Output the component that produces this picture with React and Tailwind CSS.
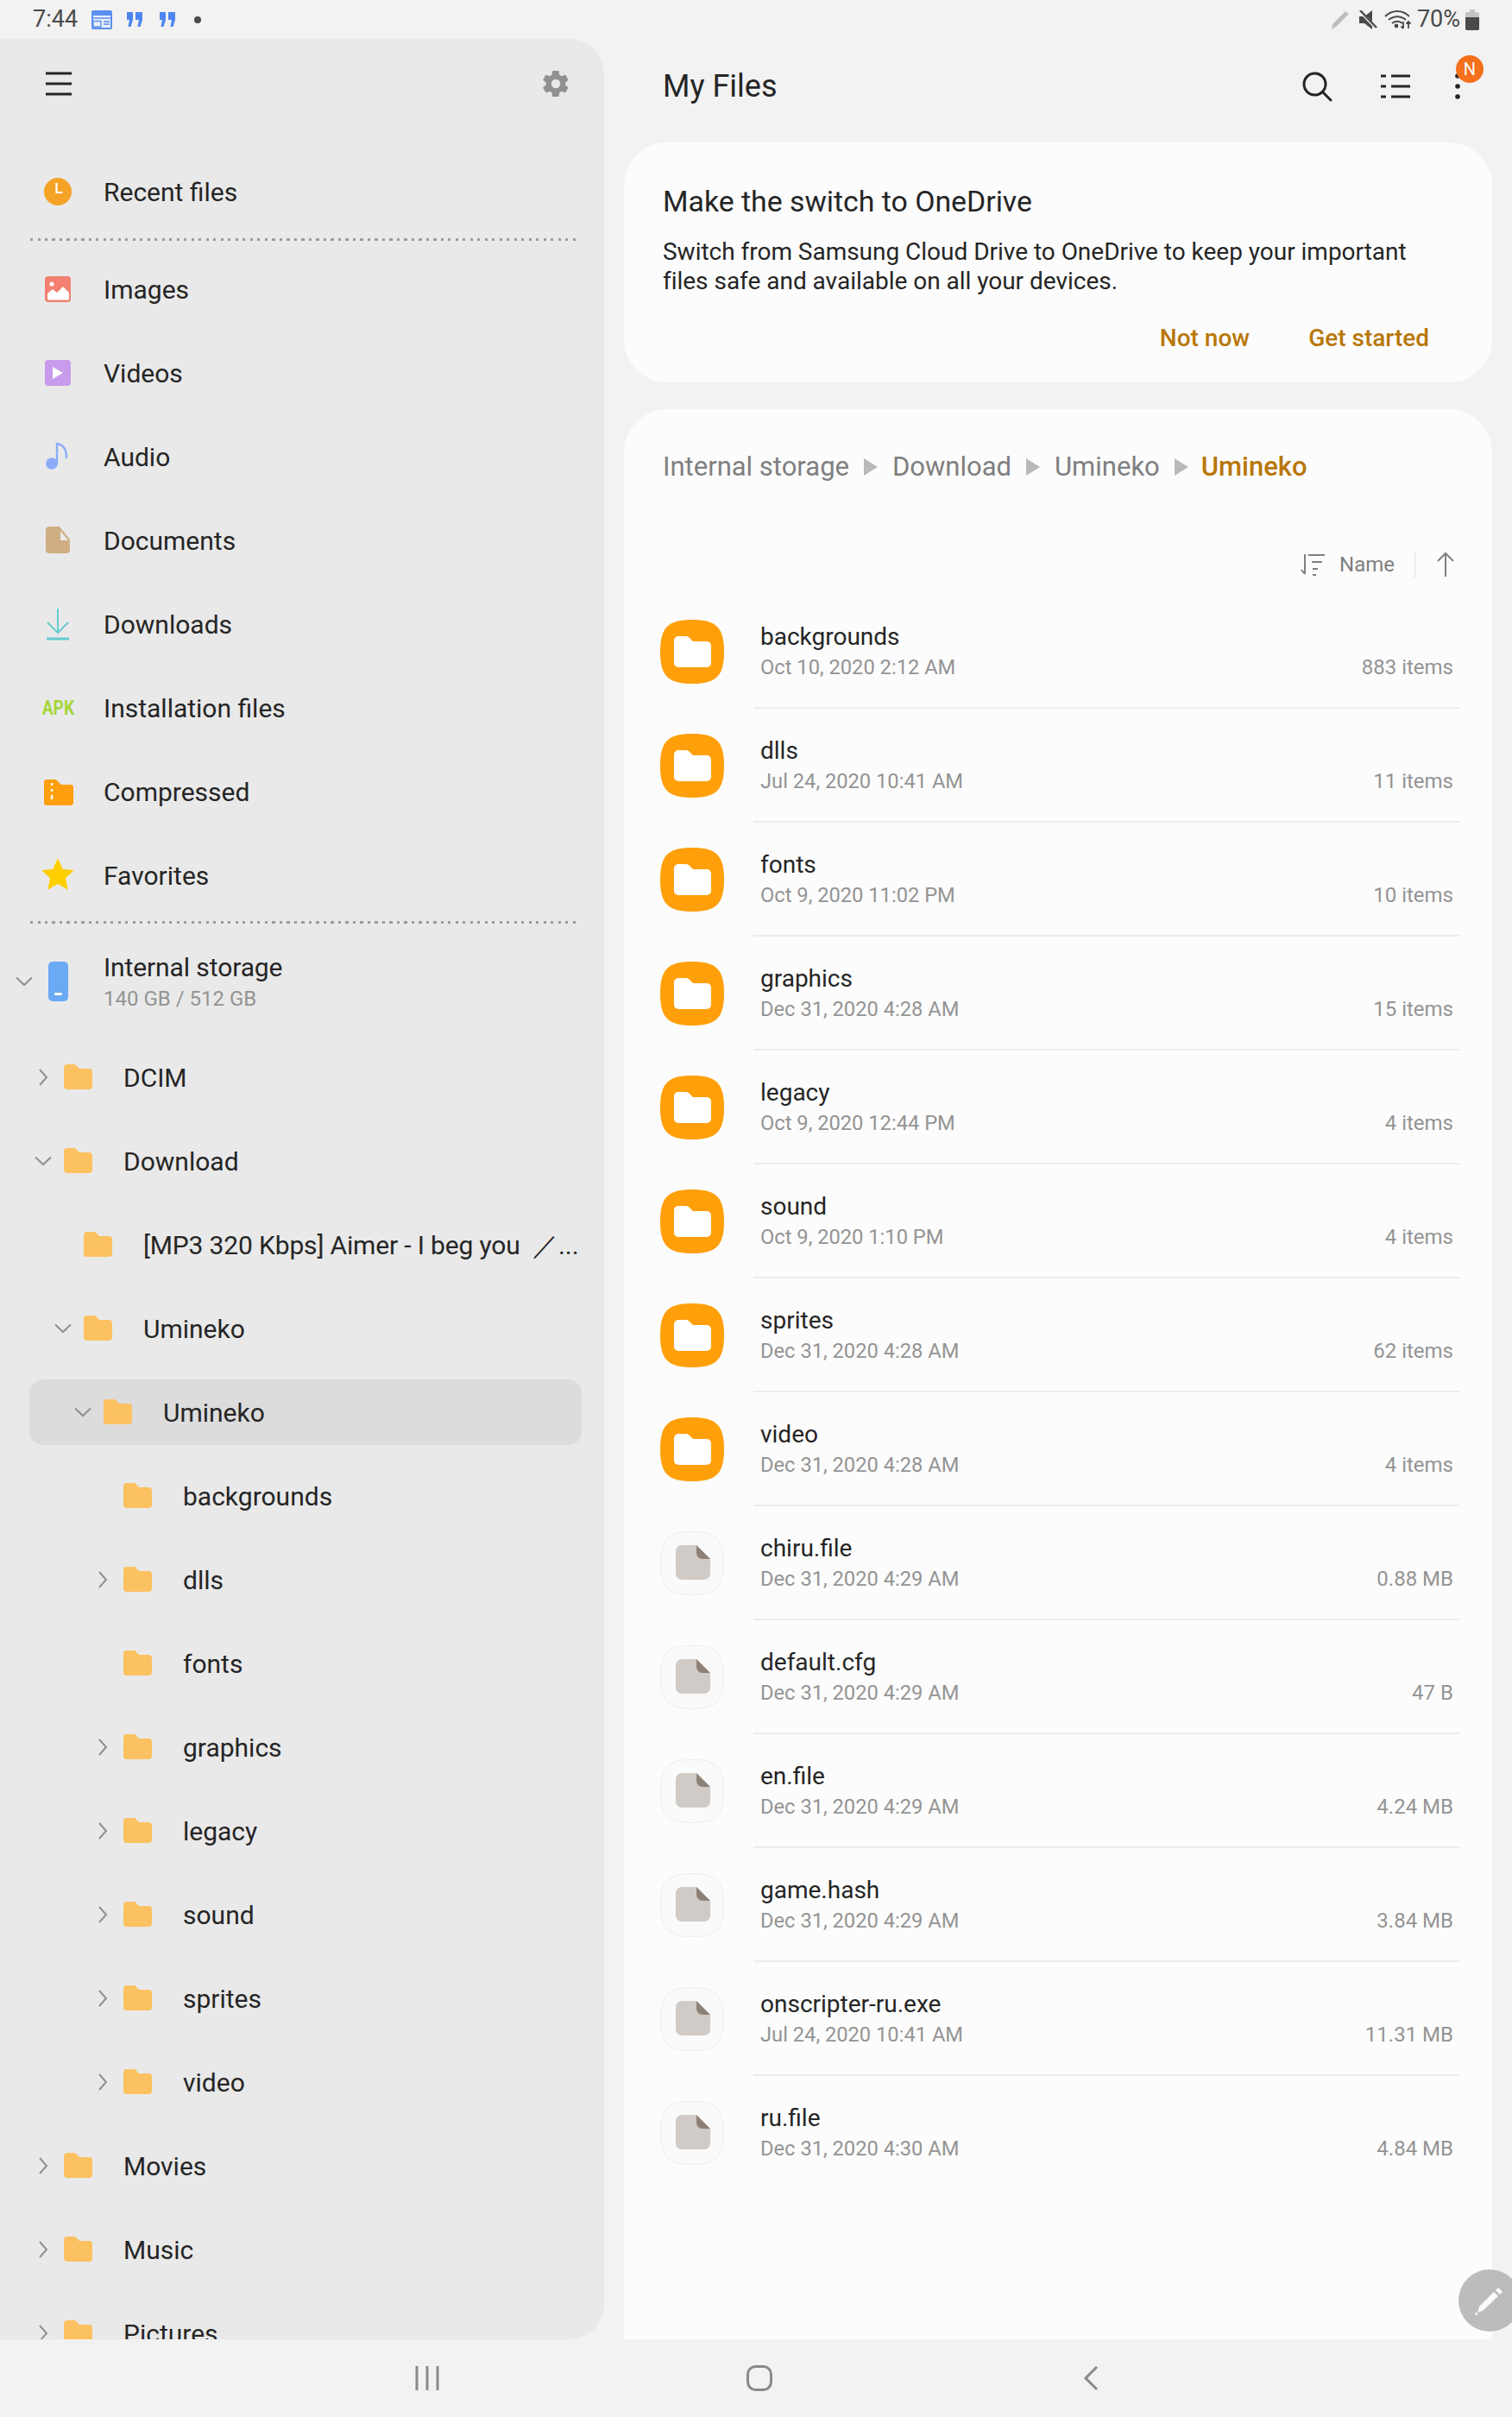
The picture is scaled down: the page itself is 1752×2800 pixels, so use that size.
import React from 'react';

const navItems = [
  ['Images', 'images'],
  ['Videos', 'videos'],
  ['Audio', 'audio'],
  ['Documents', 'documents'],
  ['Downloads', 'downloads'],
  ['Installation files', 'apk'],
  ['Compressed', 'compressed'],
  ['Favorites', 'star'],
];

const tree = [
  { name: 'DCIM', depth: 1, arrow: 'right' },
  { name: 'Download', depth: 1, arrow: 'down' },
  { name: '[MP3 320 Kbps] Aimer - I beg you \u00a0／...', depth: 2, tight: true },
  { name: 'Umineko', depth: 2, arrow: 'down' },
  { name: 'Umineko', depth: 3, arrow: 'down', active: true },
  { name: 'backgrounds', depth: 4 },
  { name: 'dlls', depth: 4, arrow: 'right' },
  { name: 'fonts', depth: 4 },
  { name: 'graphics', depth: 4, arrow: 'right' },
  { name: 'legacy', depth: 4, arrow: 'right' },
  { name: 'sound', depth: 4, arrow: 'right' },
  { name: 'sprites', depth: 4, arrow: 'right' },
  { name: 'video', depth: 4, arrow: 'right' },
  { name: 'Movies', depth: 1, arrow: 'right' },
  { name: 'Music', depth: 1, arrow: 'right' },
  { name: 'Pictures', depth: 1, arrow: 'right' },
];

const depthPad = { 1: 'pl-[6px]', 2: 'pl-[29px]', 3: 'pl-[52px]', 4: 'pl-[75px]' };

const files = [
  ['backgrounds', 'Oct 10, 2020 2:12 AM', '883 items', true],
  ['dlls', 'Jul 24, 2020 10:41 AM', '11 items', true],
  ['fonts', 'Oct 9, 2020 11:02 PM', '10 items', true],
  ['graphics', 'Dec 31, 2020 4:28 AM', '15 items', true],
  ['legacy', 'Oct 9, 2020 12:44 PM', '4 items', true],
  ['sound', 'Oct 9, 2020 1:10 PM', '4 items', true],
  ['sprites', 'Dec 31, 2020 4:28 AM', '62 items', true],
  ['video', 'Dec 31, 2020 4:28 AM', '4 items', true],
  ['chiru.file', 'Dec 31, 2020 4:29 AM', '0.88 MB'],
  ['default.cfg', 'Dec 31, 2020 4:29 AM', '47 B'],
  ['en.file', 'Dec 31, 2020 4:29 AM', '4.24 MB'],
  ['game.hash', 'Dec 31, 2020 4:29 AM', '3.84 MB'],
  ['onscripter-ru.exe', 'Jul 24, 2020 10:41 AM', '11.31 MB'],
  ['ru.file', 'Dec 31, 2020 4:30 AM', '4.84 MB'],
];

const NavIcon = ({ type }) => {
  if (type === 'apk') {
    return <span className="text-[24px] font-bold text-[#a6d53b] leading-none scale-x-[0.8]">APK</span>;
  }
  return (
    <svg width="40" height="48" viewBox="0 0 40 48">
      {type === 'clock' && (
        <>
          <ellipse cx="20" cy="24" rx="16" ry="16" fill="#f4a327" />
          <path d="M18.5 14v11h7" fill="none" stroke="#fff" strokeWidth="2.2" />
        </>
      )}
      {type === 'images' && (
        <>
          <rect x="5" y="9" width="30" height="30" rx="4" fill="#f38071" />
          <circle cx="13" cy="18" r="2.6" fill="#fff" />
          <path d="M8 35v-6l6-5 5 4 7-7 7 7v7a1.5 1.5 0 0 1-1.5 1.5h-22A1.5 1.5 0 0 1 8 35Z" fill="#fff" />
        </>
      )}
      {type === 'videos' && (
        <>
          <rect x="5" y="9" width="30" height="30" rx="4" fill="#c89bec" />
          <path d="M14 17l12 7-12 7Z" fill="#fff" />
        </>
      )}
      {type === 'audio' && (
        <>
          <circle cx="13" cy="32" r="6.8" fill="#8badf8" />
          <path d="M19 32V9c7 1 11 6 11 16" fill="none" stroke="#8badf8" strokeWidth="2.4" strokeLinecap="round" />
        </>
      )}
      {type === 'documents' && (
        <path d="M10 9h12l12 15v12a4 4 0 0 1-4 4H10a4 4 0 0 1-4-4V13a4 4 0 0 1 4-4Zm13 5v11h9Z" fill="#cfae82" fillRule="evenodd" transform="translate(0 -1)" />
      )}
      {type === 'downloads' && (
        <g fill="none" stroke="#66cbcf">
          <path d="M20 6v27M8 22l12 12 12-12" strokeWidth="2" />
          <path d="M7 41h26" strokeWidth="3" />
        </g>
      )}
      {type === 'compressed' && (
        <>
          <path d="M7 10h11l6 6h11a3 3 0 0 1 3 3v18a3 3 0 0 1-3 3H7a3 3 0 0 1-3-3V13a3 3 0 0 1 3-3Z" fill="#ff9f0d" />
          <path d="M13 14v3M13 21v3M13 28v5" stroke="#fff" strokeWidth="2.4" />
        </>
      )}
      {type === 'star' && (
        <path d="M20 6l5.2 11.6 12 1.2-9 8.2 2.6 12.4L20 33l-10.8 6.4L11.8 27l-9-8.2 12-1.2Z" fill="#ffcf00" stroke="#ffcf00" strokeWidth="1.5" strokeLinejoin="round" />
      )}
    </svg>
  );
};

const Arrow = ({ dir }) => (
  <span className="w-[20px] h-[28px] flex items-center justify-center shrink-0">
    {dir === 'right' && (
      <svg width="12" height="22" viewBox="0 0 12 22"><path d="M2 2l8 9-8 9" fill="none" stroke="#8f8f8f" strokeWidth="2" /></svg>
    )}
    {dir === 'down' && (
      <svg width="20" height="12" viewBox="0 0 20 12"><path d="M1 1.5l9 8.5 9-8.5" fill="none" stroke="#8f8f8f" strokeWidth="2" /></svg>
    )}
  </span>
);

const SmallFolder = () => (
  <svg width="33" height="29" viewBox="0 0 33 29" className="shrink-0">
    <path d="M4 0h8a3 3 0 0 1 2.4 1.2L18 5h11a4 4 0 0 1 4 4v16a4 4 0 0 1-4 4H4a4 4 0 0 1-4-4V4a4 4 0 0 1 4-4Z" fill="#fcc160" />
  </svg>
);

const Divider = ({ className }) => (
  <div className={`ml-[35px] mr-[28px] h-[3px] bg-[repeating-linear-gradient(90deg,#9b9b9b_0,#9b9b9b_3px,transparent_3px,transparent_8.5px)] ${className}`}></div>
);

const TreeRow = ({ item }) => (
  <div className={`ml-[34px] mr-[26px] my-[10.5px] h-[76px] shrink-0 flex items-center rounded-[16px] ${depthPad[item.depth]} ${item.active ? 'bg-[#dcdcdc]' : ''}`}>
    <Arrow dir={item.arrow} />
    <span className="ml-[14px]"><SmallFolder /></span>
    <span className={`ml-[36px] pt-[2px] text-[30px] text-[#252525] whitespace-nowrap ${item.tight ? 'tracking-[-0.15px]' : ''}`}>{item.name}</span>
  </div>
);

const Sidebar = () => (
  <aside className="w-[700px] h-full shrink-0 bg-[#e9e9e9] rounded-tr-[40px] rounded-br-[40px] overflow-hidden flex flex-col">
    <div className="h-[104px] shrink-0 pl-[53px] pr-[38px] flex items-center justify-between">
      <svg width="30" height="28" viewBox="0 0 30 28">
        <path d="M0 2h30M0 14h30M0 26h30" stroke="#252525" strokeWidth="3" />
      </svg>
      <svg width="36" height="36" viewBox="0 0 24 24" fill="#909090">
        <path d="M19.4 13a7.6 7.6 0 0 0 0-2l2.1-1.6a.5.5 0 0 0 .1-.6l-2-3.5a.5.5 0 0 0-.6-.2l-2.5 1a7.3 7.3 0 0 0-1.7-1L14.400 2.400a.5.5 0 0 0-.5-.4h-4a.5.5 0 0 0-.5.4L9 5.100a7.600 7.600 0 0 0-1.700 1l-2.500-1a.5.5 0 0 0-.6.2l-2 3.500a.5.5 0 0 0 .1.6L4.500 11a7.600 7.600 0 0 0 0 2l-2.200 1.600a.5.5 0 0 0-.1.6l2 3.500a.5.5 0 0 0 .6.2l2.500-1c.5.4 1.100.7 1.700 1l.4 2.700c0 .2.3.4.5.4h4c.2 0 .5-.2.5-.4l.4-2.700c.6-.3 1.200-.6 1.700-1l2.500 1a.5.5 0 0 0 .6-.2l2-3.500a.5.5 0 0 0-.1-.6ZM12 15.500a3.500 3.500 0 1 1 0-7 3.500 3.500 0 0 1 0 7Z" />
      </svg>
    </div>
    <div className="mt-[24px] h-[97px] shrink-0 pl-[47px] flex items-center">
      <span className="w-[40px] flex justify-center"><NavIcon type="clock" /></span>
      <span className="ml-[33px] pt-[2px] text-[30px] text-[#252525]">Recent files</span>
    </div>
    <Divider className="mt-[6px] mb-[7px] shrink-0" />
    {navItems.map(([label, icon]) => (
      <div key={label} className="h-[97px] shrink-0 pl-[47px] flex items-center">
        <span className="w-[40px] h-[48px] flex items-center justify-center"><NavIcon type={icon} /></span>
        <span className="ml-[33px] pt-[2px] text-[30px] text-[#252525]">{label}</span>
      </div>
    ))}
    <Divider className="mt-[5px] shrink-0" />
    <div className="h-[129px] shrink-0 pl-[18px] pt-[5px] flex items-center">
      <Arrow dir="down" />
      <span className="ml-[18px] w-[23px] h-[46px] rounded-[5px] bg-[#6aa9f3] flex items-end justify-center pb-[7px]">
        <span className="w-[9px] h-[3px] rounded-full bg-white"></span>
      </span>
      <div className="ml-[41px] pt-[2px] flex flex-col">
        <span className="text-[30px] leading-[38px] text-[#252525] tracking-[-0.1px]">Internal storage</span>
        <span className="text-[24px] leading-[34px] text-[#949494]">140 GB / 512 GB</span>
      </div>
    </div>
    {tree.map((item, i) => <TreeRow key={i} item={item} />)}
  </aside>
);

const FileIcon = () => (
  <svg width="74" height="74" viewBox="0 0 74 74" className="shrink-0">
    <path d="M37 .5C65 .5 73.500 9 73.500 37S65 73.500 37 73.500.5 65 .5 37 9 .5 37 .5Z" fill="#fafafa" stroke="#eeeeee" />
    <path d="M25 16H42L58 32V49a7 7 0 0 1-7 7H25a7 7 0 0 1-7-7V23a7 7 0 0 1 7-7Z" fill="#d0cbc6" />
    <path d="M42 16L58 32H49a7 7 0 0 1-7-7Z" fill="#8d8177" />
  </svg>
);

const FolderIcon = () => (
  <svg width="74" height="74" viewBox="0 0 74 74" className="shrink-0">
    <path d="M37 0C65 0 74 9 74 37S65 74 37 74 0 65 0 37 9 0 37 0Z" fill="#ff9f0a" />
    <path d="M21 19h9c2 0 3 1 4 2l4 4h16a5 5 0 0 1 5 5v20a5 5 0 0 1-5 5H21a5 5 0 0 1-5-5V24a5 5 0 0 1 5-5Z" fill="#fff" />
  </svg>
);

const FileRow = ({ file, last }) => {
  const [name, date, size, isFolder] = file;
  return (
    <div className="h-[132px] flex">
      <div className="w-[150px] pl-[42px] shrink-0 flex items-center">
        {isFolder ? <FolderIcon /> : <FileIcon />}
      </div>
      <div className={`flex-1 mr-[38px] pl-[8px] pr-[7px] flex items-center justify-between border-b-2 ${last ? 'border-transparent' : 'border-[#ececec]'}`}>
        <div className="flex flex-col">
          <span className="pt-[1px] text-[28px] leading-[38px] text-[#252525]">{name}</span>
          <span className="text-[23.7px] leading-[33px] text-[#949494]">{date}</span>
        </div>
        <span className="text-[24px] leading-[34px] text-[#949494] self-end mb-[29px]">{size}</span>
      </div>
    </div>
  );
};

const Caret = () => (
  <svg width="16" height="24" viewBox="0 0 16 24" className="mx-[17px]"><path d="M0 2l16 10L0 22Z" fill="#b9b9b9" /></svg>
);

const Main = () => (
  <main className="flex-1 h-full flex flex-col relative">
    <div className="h-[120px] shrink-0 pl-[68px] pr-[60px] pb-[10px] flex items-center justify-between">
      <span className="text-[36px] text-[#252525]">My Files</span>
      <div className="flex items-center">
        <svg width="36" height="36" viewBox="0 0 36 36" className="mr-[56px]">
          <circle cx="15.500" cy="15.500" r="12.500" fill="none" stroke="#252525" strokeWidth="3" />
          <path d="M24.500 24.500L34 34" stroke="#252525" strokeWidth="3" strokeLinecap="round" />
        </svg>
        <svg width="34" height="28" viewBox="0 0 34 28" className="mr-[52px]">
          <path d="M0 2h6M12 2h22M0 14h6M12 14h22M0 26h6M12 26h22" stroke="#252525" strokeWidth="3" />
        </svg>
        <div className="relative">
          <svg width="6" height="30" viewBox="0 0 6 30"><circle cx="3" cy="3" r="2.800" fill="#252525" /><circle cx="3" cy="15" r="2.800" fill="#252525" /><circle cx="3" cy="27" r="2.800" fill="#252525" /></svg>
          <span className="absolute left-[1px] top-[-21px] w-[32px] h-[32px] rounded-full bg-[#f5701a] text-white text-[20px] flex items-center justify-center">N</span>
        </div>
      </div>
    </div>
    <section className="ml-[23px] mr-[23px] h-[278px] shrink-0 bg-[#fcfcfc] rounded-[50px] pl-[45px] pr-[73px] pt-[46px]">
      <h2 className="text-[33.8px] leading-[46px] text-[#252525]">Make the switch to OneDrive</h2>
      <p className="mt-[18px] text-[28px] leading-[34px] text-[#252525] tracking-[-0.02px]">Switch from Samsung Cloud Drive to OneDrive to keep your important files safe and available on all your devices.</p>
      <div className="mt-[31px] flex justify-end text-[28px] leading-[36px] font-medium text-[#b8770a]">
        <span>Not now</span>
        <span className="ml-[68px]">Get started</span>
      </div>
    </section>
    <section className="mt-[31px] ml-[23px] mr-[23px] flex-1 bg-[#fcfcfc] rounded-t-[50px]">
      <div className="pt-[37px] h-[97px] pl-[45px] flex items-center">
        <span className="text-[31px] text-[#7f7f7f]">Internal storage</span>
        <Caret />
        <span className="text-[31px] text-[#7f7f7f]">Download</span>
        <Caret />
        <span className="text-[31px] text-[#7f7f7f]">Umineko</span>
        <Caret />
        <span className="-ml-[2px] text-[31px] font-medium text-[#b8770a]">Umineko</span>
      </div>
      <div className="mt-[63px] h-[40px] pr-[42px] flex items-center justify-end">
        <svg width="30" height="26" viewBox="0 0 30 26">
          <path d="M5 1v23M1 19l4 5M9 2h19M13 10h12M14 18h6M14 25h4" fill="none" stroke="#7f7f7f" strokeWidth="2" />
        </svg>
        <span className="ml-[15px] text-[24px] text-[#7f7f7f]">Name</span>
        <span className="ml-[23px] w-[1px] h-[30px] bg-[#dddddd]"></span>
        <svg width="24" height="30" viewBox="0 0 24 30" className="ml-[23px]">
          <path d="M12 29V2M3 11l9-9 9 9" fill="none" stroke="#7f7f7f" strokeWidth="2" />
        </svg>
      </div>
      <div className="mt-[15px]">
        {files.map((f, i) => <FileRow key={f[0]} file={f} last={i === files.length - 1} />)}
      </div>
    </section>
    <div className="absolute right-[-10px] bottom-[9px] w-[72px] h-[72px] rounded-full bg-[#b5b5b5]/90 flex items-center justify-center">
      <svg width="36" height="36" viewBox="0 0 36 36"><path d="M28 3l5 5-3 3-5-5ZM23 8l5 5L10 30l-6 2 2-7Z" fill="#fafafa" /><circle cx="2.500" cy="33.500" r="1.500" fill="#fafafa" /></svg>
    </div>
  </main>
);

const StatusBar = () => (
  <header className="h-[45px] shrink-0 pl-[38px] pr-[38px] flex items-center justify-between">
    <div className="flex items-center">
      <span className="text-[27px] leading-none text-[#4a4a4a] w-[68px]">7:44</span>
      <svg width="24" height="22" viewBox="0 0 24 22">
        <rect x="0" y="0" width="24" height="22" rx="2" fill="#5b8ff0" />
        <rect x="2" y="6" width="20" height="14" fill="#e8f0fd" />
        <path d="M2 9h20M2 12.500h9v7M14 13h7M14 16h7M2 13v6h9" stroke="#5b8ff0" strokeWidth="1.300" fill="none" />
      </svg>
      <svg width="18" height="18" viewBox="0 0 18 18" className="ml-[17px]">
        <path d="M0 0h7v9l-2.500 8H1.500L3 9H0ZM10 0h8v9l-2.500 8h-3L14 9h-4Z" fill="#4d86f0" />
      </svg>
      <svg width="18" height="18" viewBox="0 0 18 18" className="ml-[20px]">
        <path d="M0 0h7v9l-2.500 8H1.500L3 9H0ZM10 0h8v9l-2.500 8h-3L14 9h-4Z" fill="#4d86f0" />
      </svg>
      <span className="ml-[22px] w-[8px] h-[8px] rounded-full bg-[#4a4a4a]"></span>
    </div>
    <div className="flex items-center">
      <svg width="24" height="24" viewBox="0 0 24 24">
        <path d="M18 2l4 3L7 20l-5 3 1-6Z" fill="#bdbdbd" />
      </svg>
      <svg width="22" height="22" viewBox="0 0 22 22" className="ml-[9px]">
        <path d="M1 7h6l9-7v22l-9-7H1Z" fill="#4a4a4a" />
        <path d="M2 1l19 20" stroke="#f2f2f2" strokeWidth="3.500" />
        <path d="M2 0l19 20" stroke="#4a4a4a" strokeWidth="2.400" />
      </svg>
      <svg width="32" height="24" viewBox="0 0 32 24" className="ml-[8px]" fill="none" stroke="#4a4a4a" strokeWidth="1.800">
        <path d="M1 8c8-8 20-8 28 0M5 12c6-5 14-5 20 0M9 16c3-3 9-3 12 0" />
        <circle cx="14" cy="19" r="1.500" fill="#4a4a4a" />
        <path d="M22 14v8M19.500 19.500L22 22M28 22v-8M25.500 16.500L28 14l2.500 2.500" />
      </svg>
      <span className="ml-[6px] text-[27px] leading-none text-[#4a4a4a]">70%</span>
      <svg width="16" height="24" viewBox="0 0 16 24" className="ml-[6px]">
        <path d="M5 0h6v3h3a2 2 0 0 1 2 2v17a2 2 0 0 1-2 2H2a2 2 0 0 1-2-2V5a2 2 0 0 1 2-2h3Z" fill="#c4c4c4" />
        <path d="M0 9h16v13a2 2 0 0 1-2 2H2a2 2 0 0 1-2-2Z" fill="#4a4a4a" />
      </svg>
    </div>
  </header>
);

const NavBar = () => (
  <footer className="h-[90px] shrink-0 flex items-center">
    <svg width="28" height="28" viewBox="0 0 28 28" className="ml-[481px]">
      <path d="M2 0v28M14 0v28M26 0v28" stroke="#8a8a8a" strokeWidth="3" />
    </svg>
    <svg width="30" height="30" viewBox="0 0 30 30" className="ml-[356px]">
      <rect x="1.500" y="1.500" width="27" height="27" rx="9" fill="none" stroke="#8a8a8a" strokeWidth="3" />
    </svg>
    <svg width="18" height="30" viewBox="0 0 18 30" className="ml-[360px]">
      <path d="M16 2L3 15l13 13" fill="none" stroke="#8a8a8a" strokeWidth="3" />
    </svg>
  </footer>
);

export default function App() {
  return (
    <div className="w-[1752px] h-[2800px] overflow-hidden bg-[#f2f2f2] flex flex-col font-['Roboto',sans-serif]">
      <StatusBar />
      <div className="h-[2665px] shrink-0 flex">
        <Sidebar />
        <Main />
      </div>
      <NavBar />
    </div>
  );
}
